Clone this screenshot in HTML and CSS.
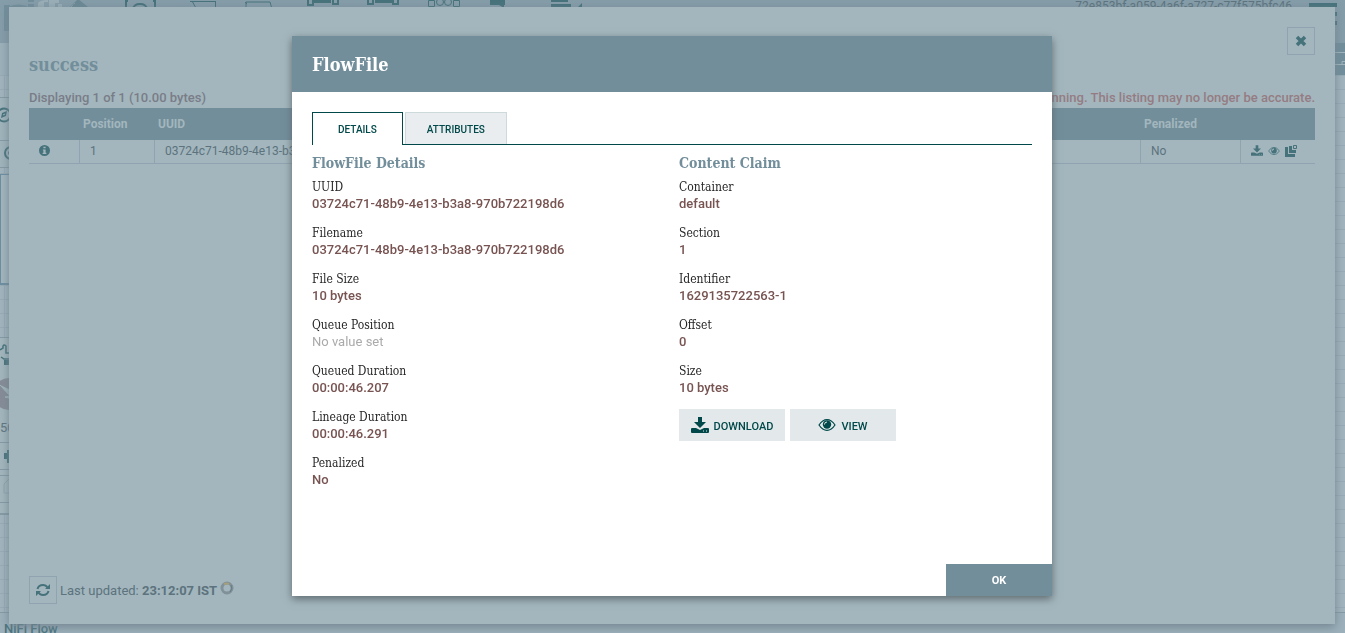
FILE: index.html
```html
<!DOCTYPE html>
<html lang="en">
<head>
  <meta charset="UTF-8" />
  <meta name="viewport" content="width=device-width, initial-scale=1.0"/>
  <title>NiFi Flow</title>
  <link rel="stylesheet" href="styles.css">
</head>
<body>

  <svg class="symbols" aria-hidden="true">
    <symbol id="icon-download" viewBox="0 0 18 16">
      <path d="M7 0h4v5h4l-6 6-6-6h4z"/>
      <path d="M1 11h4l4 2 4-2h4q1 0 1 1v3q0 1-1 1H1q-1 0-1-1v-3q0-1 1-1zm11 2.500v1h1v-1zm3 0v1h1v-1z" fill-rule="evenodd"/>
    </symbol>
    <symbol id="icon-eye" viewBox="0 0 18 12">
      <path d="M1 6C4 1.500 6.500.7 9 .7S14 1.500 17 6c-3 4.500-5.500 5.300-8 5.300S4 10.500 1 6z" fill="none" stroke="currentColor" stroke-width="1.200"/>
      <circle cx="9" cy="5.500" r="4.200"/>
      <path d="M6.500 5.500Q6.500 3 9 3" class="glint"/>
    </symbol>
  </svg>

  <div class="page">
    <header class="toolbar">
      <svg class="logo" width="110" height="43" viewBox="0 0 110 43">
        <path d="M4 5h6v1q8-3 17 0v25H4z" fill="#728e9b"/>
        <path d="M28 0h6v2h-6zM28 4h6v3h-6z" fill="#728e9b"/>
        <path d="M38 3q2-3 10-3v2h-4v5h-6zM49 0h10v3h-4v4h-6zM58 4h4v3h-4z" fill="#99aeb7"/>
        <path d="M70 7l8-8 10 8z" fill="#6a8894"/>
        <path d="M71 7l4-4" stroke="#99aeb7" stroke-dasharray="1 1"/>
      </svg>
      <div class="tools">
        <svg viewBox="0 0 60 43"><path d="M16 0v9M45 0v9M15 1h3M43 1h3M23 9q1-5 7-5t7 5" stroke-width="2"/></svg>
        <svg viewBox="0 0 60 43"><path d="M20 1.500h26M22 1l4 7M45.500 2v7"/></svg>
        <svg viewBox="0 0 60 43"><path d="M16 9V2h24l2 7M15 2l2 2"/></svg>
        <svg viewBox="0 0 60 43"><path d="M18 0v5h5V0M43 0v4h5V0" stroke-width="2"/><path d="M24 0h17v3H24z" class="solid"/></svg>
        <svg viewBox="0 0 60 43"><path d="M18 0v4h5V0M43 0v4h5V0" stroke-width="2"/><path d="M25 0h17v3H25z" class="solid"/></svg>
        <svg viewBox="0 0 60 43"><path d="M18.500.5h6v6h-6zM43.500.5h6v6h-6z"/><circle cx="30" cy="2" r="3.500"/><circle cx="38" cy="2" r="3.500"/></svg>
        <svg viewBox="0 0 60 43"><path d="M20 0h15v5h-1v3l-5-3h-9z" class="solid"/></svg>
        <svg viewBox="0 0 60 43"><path d="M21 0h17v2H21zM21 4h20v3H21zM48 7l4-4v4z" class="solid"/></svg>
      </div>
      <span class="user">72e853bf-a059-4a6f-a727-c77f575bfc46</span>
      <svg class="menu" width="28" height="28" viewBox="0 0 28 28"><path d="M0 3h28v4H0zM0 12h28v4H0zM0 21h28v4H0z"/></svg>
    </header>
    <div class="status">
      <svg width="12" height="32" viewBox="0 0 12 32"><path d="M0 0h12v32H0z" fill="#728e9b"/><path d="M12 9.500H0M0 21.500h12M9 21v-2.500h3" fill="none" stroke="#a3b6bd"/></svg>
    </div>
    <main class="canvas">
      <div class="palette navigate">
        <svg width="22" height="43" viewBox="0 0 22 43"><circle cx="4" cy="17" r="6.500" fill="none" stroke="#46727b" stroke-width="2"/><path d="M1 20l1-5 5-2-1 5z" fill="#46727b"/><path d="M3 17l2-1" stroke="#a0b4bc"/></svg>
      </div>
      <div class="palette operate">
        <svg width="22" height="26" viewBox="0 0 22 26"><circle cx="11" cy="12" r="6" fill="none" stroke="#46727b" stroke-width="2"/><circle cx="10" cy="12" r="2" fill="#46727b"/></svg>
      </div>
      <div class="selection"></div>
      <div class="component">
        <svg width="24" height="82" viewBox="0 0 24 82">
          <path d="M0 12l3-2V8q1-2 3 0v7h4M1 19l3 2h8" fill="none" stroke="#46727b" stroke-width="1.500"/>
          <path d="M4 22h10v5H4z" fill="#46727b"/>
          <circle cx="9" cy="56" r="16" fill="#858c97"/>
          <path d="M0 47l10 11-5 1 7 2 1-8" fill="#a3b6bd" stroke="#a3b6bd"/>
        </svg>
        <span>50</span>
        <svg width="24" height="70" viewBox="0 0 24 70">
          <path d="M0 6.500h24M0 33.500h24M0 39.500h24M0 66.500h24" stroke="#8399a4"/>
          <path d="M4 17h3v-3h6v13H7v-4H4z" fill="#46727b"/>
          <path d="M4 57V48l6-6v15z" fill="none" stroke="#8fa4b0"/>
        </svg>
      </div>
    </main>
    <footer class="breadcrumbs"><a href="#">NiFi Flow</a></footer>
  </div>

  <section class="shell">
    <button class="square close" aria-label="Close">
      <svg width="14" height="14" viewBox="0 0 14 14"><path d="M3 3l8 8M11 3l-8 8" stroke="currentColor" stroke-width="3.500"/></svg>
    </button>
    <h1>success</h1>
    <div class="listing-info">
      <span>Displaying 1 of 1 (10.00 bytes)</span>
      <span class="warning">The source of this queue is currently running. This listing may no longer be accurate.</span>
    </div>
    <table>
      <colgroup><col class="col-info"><col class="col-position"><col><col class="col-penalized"><col class="col-actions"></colgroup>
      <thead>
        <tr><th></th><th>Position</th><th>UUID</th><th>Penalized</th><th></th></tr>
      </thead>
      <tbody>
        <tr>
          <td><svg width="11" height="11" viewBox="0 0 10 10"><path fill-rule="evenodd" d="M5 0a5 5 0 100 10A5 5 0 005 0zM4 1.500h2V3H4zM3.500 4H6v3h.7v1.200H3.300V7H4V5h-.5z"/></svg></td>
          <td>1</td>
          <td>03724c71-48b9-4e13-b3a8-970b722198d6</td>
          <td>No</td>
          <td>
            <div class="actions">
              <svg width="12" height="11"><use href="#icon-download"/></svg>
              <svg width="12" height="10"><use href="#icon-eye"/></svg>
              <svg width="12" height="12" viewBox="0 0 12 12"><path d="M0 2h3v7h7v3H0zM4 1h3v4h4v3H4z"/><path d="M8.500.5h3v3h-3z" fill="none" stroke="currentColor"/></svg>
            </div>
          </td>
        </tr>
      </tbody>
    </table>
    <div class="refresh">
      <button class="square" aria-label="Refresh">
        <svg width="14" height="14" viewBox="0 0 14 14"><path d="M1.500 6Q2.500 2 7 2q3 0 4.500 2.500M12.500 8Q11.500 12 7 12q-3 0-4.500-2.500" fill="none" stroke="currentColor" stroke-width="2"/><path d="M14 1v5H9zM0 13V8h5z"/></svg>
      </button>
      <span>Last updated: <b>23:12:07 IST</b></span>
      <svg class="spinner" width="14" height="14" viewBox="0 0 14 14"><circle cx="7" cy="7" r="5" fill="none" stroke="#80919a" stroke-width="3"/><path d="M4 3q2-1 5 0" fill="none" stroke="#a69f7c" stroke-width="2"/><path d="M11 4q2 4-1 7" fill="none" stroke="#687b84"/></svg>
    </div>
  </section>

  <div class="overlay">
    <div class="dialog" role="dialog" aria-labelledby="dialogTitle">
      <h2 id="dialogTitle">FlowFile</h2>
      <div class="dialog-content">
        <div class="tabs">
          <button class="tab selected">DETAILS</button>
          <button class="tab">ATTRIBUTES</button>
        </div>
        <div class="columns">
          <div class="column">
            <h3>FlowFile Details</h3>
            <dl>
              <dt>UUID</dt><dd>03724c71-48b9-4e13-b3a8-970b722198d6</dd>
              <dt>Filename</dt><dd>03724c71-48b9-4e13-b3a8-970b722198d6</dd>
              <dt>File Size</dt><dd>10 bytes</dd>
              <dt>Queue Position</dt><dd class="unset">No value set</dd>
              <dt>Queued Duration</dt><dd>00:00:46.207</dd>
              <dt>Lineage Duration</dt><dd>00:00:46.291</dd>
              <dt>Penalized</dt><dd>No</dd>
            </dl>
          </div>
          <div class="column">
            <h3>Content Claim</h3>
            <dl>
              <dt>Container</dt><dd>default</dd>
              <dt>Section</dt><dd>1</dd>
              <dt>Identifier</dt><dd>1629135722563-1</dd>
              <dt>Offset</dt><dd>0</dd>
              <dt>Size</dt><dd>10 bytes</dd>
            </dl>
            <div class="content-buttons">
              <button><svg width="18" height="16"><use href="#icon-download"/></svg><span>DOWNLOAD</span></button>
              <button><svg width="18" height="12"><use href="#icon-eye"/></svg><span>VIEW</span></button>
            </div>
          </div>
        </div>
      </div>
      <div class="dialog-buttons"><button>OK</button></div>
    </div>
  </div>

</body>
</html>
```
FILE: styles.css
```css
* {
  box-sizing: border-box;
}
body {
  margin: 0;
  height: 100vh;
  overflow: hidden;
  font-family: Roboto, sans-serif;
  font-size: 13px;
  color: #5c737d;
}
svg {
  display: block;
  fill: currentColor;
}
button {
  font-family: inherit;
  border: none;
  padding: 0;
  cursor: pointer;
}
h1, h2, h3, dt {
  font-family: 'Roboto Slab', 'DejaVu Serif Condensed', 'DejaVu Serif', serif;
}
.symbols {
  position: absolute;
  width: 0;
  height: 0;
}
.glint {
  fill: none;
  stroke: #e3e8eb;
}

/* flow page behind the shell */
.page {
  height: 100vh;
  display: flex;
  flex-direction: column;
  background: #a0b3bd;
}
.toolbar {
  display: flex;
  align-items: flex-start;
  height: 43px;
  padding-right: 8px;
  background: #859da9;
}
.tools {
  display: flex;
  flex: 1;
  color: #46727b;
}
.tools svg {
  width: 60px;
  height: 43px;
  fill: none;
  stroke: currentColor;
}
.tools .solid {
  fill: currentColor;
  stroke: none;
}
.user {
  font-size: 12px;
  line-height: 12px;
  margin-right: 17px;
}
.menu {
  color: #46727b;
}
.status {
  display: flex;
  justify-content: flex-end;
  height: 32px;
  background: #9cb0bb;
  box-shadow: 0 1px 2px #8399a4;
}
.canvas {
  flex: 1;
  padding-top: 22px;
  background-color: #a2b5be;
  background-image: linear-gradient(#97abb6 1px, transparent 1px), linear-gradient(90deg, #97abb6 1px, transparent 1px);
  background-size: 14px 14px;
  background-position: 4px 0;
}
.palette {
  width: 40px;
  background: #a0b4bc;
  border-top: 1px solid #8399a4;
}
.navigate {
  height: 43px;
}
.operate {
  height: 28px;
  border-bottom: 1px solid #8399a4;
}
.selection {
  width: 40px;
  height: 111px;
  margin-top: 6px;
  border: 1px solid #6c8ea1;
  border-bottom-width: 2px;
  background: #a3b6bd;
}
.component {
  width: 40px;
  height: 178px;
  margin-top: 52px;
  border-top: 1px solid #8399a4;
  border-bottom: 2px solid #8399a4;
  background: #a3b6bd;
}
.component span {
  display: block;
  line-height: 16px;
}
.breadcrumbs {
  height: 21px;
  padding: 8px 4px 0;
  line-height: 15px;
  border-top: 1px solid #8399a4;
  background: #9cb0bb;
}
.breadcrumbs a {
  color: #46727b;
  font-weight: 500;
  text-decoration: none;
}

/* queue listing */
.shell {
  position: absolute;
  top: 7px;
  right: 10px;
  bottom: 9px;
  left: 9px;
  display: flex;
  flex-direction: column;
  padding: 20px;
  background: #a3b6bd;
  box-shadow: 0 3px 9px #728590;
}
.square {
  display: flex;
  align-items: center;
  justify-content: center;
  width: 28px;
  height: 28px;
  color: #46727b;
  background: transparent;
  border: 1px solid #8fa4b0;
}
.close {
  align-self: flex-end;
}
h1 {
  margin: 0;
  font-size: 18px;
  line-height: 20px;
  color: #728e9b;
}
.listing-info {
  display: flex;
  justify-content: space-between;
  margin: 15px 0 2px;
  line-height: 16px;
  font-weight: 500;
  color: #7a7d88;
}
.warning {
  color: #957c83;
}
table {
  width: 100%;
  table-layout: fixed;
  border-collapse: separate;
  border-spacing: 0;
}
.col-info {
  width: 51px;
}
.col-position {
  width: 75px;
}
.col-penalized {
  width: 100px;
}
.col-actions {
  width: 74px;
}
th {
  height: 32px;
  padding: 0 3px;
  font-size: 12px;
  text-align: left;
  color: #a3b6bd;
  background: #728e9b;
}
td {
  height: 24px;
  padding: 0 10px 2px;
  font-size: 12px;
  border-right: 1px solid #8fa4b0;
  border-bottom: 1px solid #8fa4b0;
}
td:last-child {
  border-right: none;
}
td svg {
  color: #46727b;
}
.actions {
  display: flex;
  align-items: center;
  gap: 5px;
}
.refresh {
  display: flex;
  align-items: center;
  gap: 3px;
  margin-top: auto;
}
.refresh b {
  font-weight: 700;
}
.spinner {
  margin-bottom: 5px;
}

/* flowfile dialog */
.overlay {
  position: fixed;
  inset: 0;
  display: flex;
  align-items: center;
  justify-content: center;
  padding: 0 1px 1px 0;
}
.dialog {
  display: flex;
  flex-direction: column;
  width: 760px;
  max-width: 100%;
  min-height: 560px;
  background: #fff;
  box-shadow: 0 3px 8px #5f6b70;
}
h2 {
  margin: 0;
  padding: 2px 20px 0;
  font-size: 18px;
  line-height: 54px;
  color: #fff;
  background: #728e9b;
}
.dialog-content {
  flex: 1;
  padding: 20px;
}
.tabs {
  display: flex;
  gap: 2px;
  height: 33px;
  border-bottom: 1px solid #004849;
}
.tab {
  height: 32px;
  padding: 2px 21px 0;
  font-size: 10px;
  font-weight: 500;
  color: #004849;
  background: #e9edf0;
  border: 1px solid #ccdadb;
  border-bottom: none;
}
.tab.selected {
  height: 33px;
  padding: 1px 25px 0;
  background: #fff;
  border-color: #004849;
}
.columns {
  display: grid;
  grid-template-columns: 367px 1fr;
  padding-top: 8px;
}
h3 {
  margin: 0 0 6px;
  font-size: 14px;
  line-height: 20px;
  color: #728e9b;
}
dl {
  margin: 0;
}
dt {
  font-size: 12px;
  line-height: 17px;
  color: #262626;
}
dd {
  margin: 0 0 14px;
  font-weight: 500;
  line-height: 15px;
  color: #775351;
}
dd.unset {
  font-weight: 400;
  color: #aaa;
}
.content-buttons {
  display: flex;
  gap: 5px;
}
.content-buttons button {
  display: flex;
  align-items: center;
  justify-content: center;
  gap: 5px;
  width: 106px;
  height: 32px;
  font-size: 11px;
  font-weight: 500;
  color: #004849;
  background: #e3e8eb;
}
.content-buttons span {
  padding-top: 2px;
}
.dialog-buttons {
  display: flex;
  justify-content: flex-end;
}
.dialog-buttons button {
  width: 106px;
  height: 32px;
  font-size: 11px;
  font-weight: 700;
  color: #fff;
  background: #728e9b;
}
```
